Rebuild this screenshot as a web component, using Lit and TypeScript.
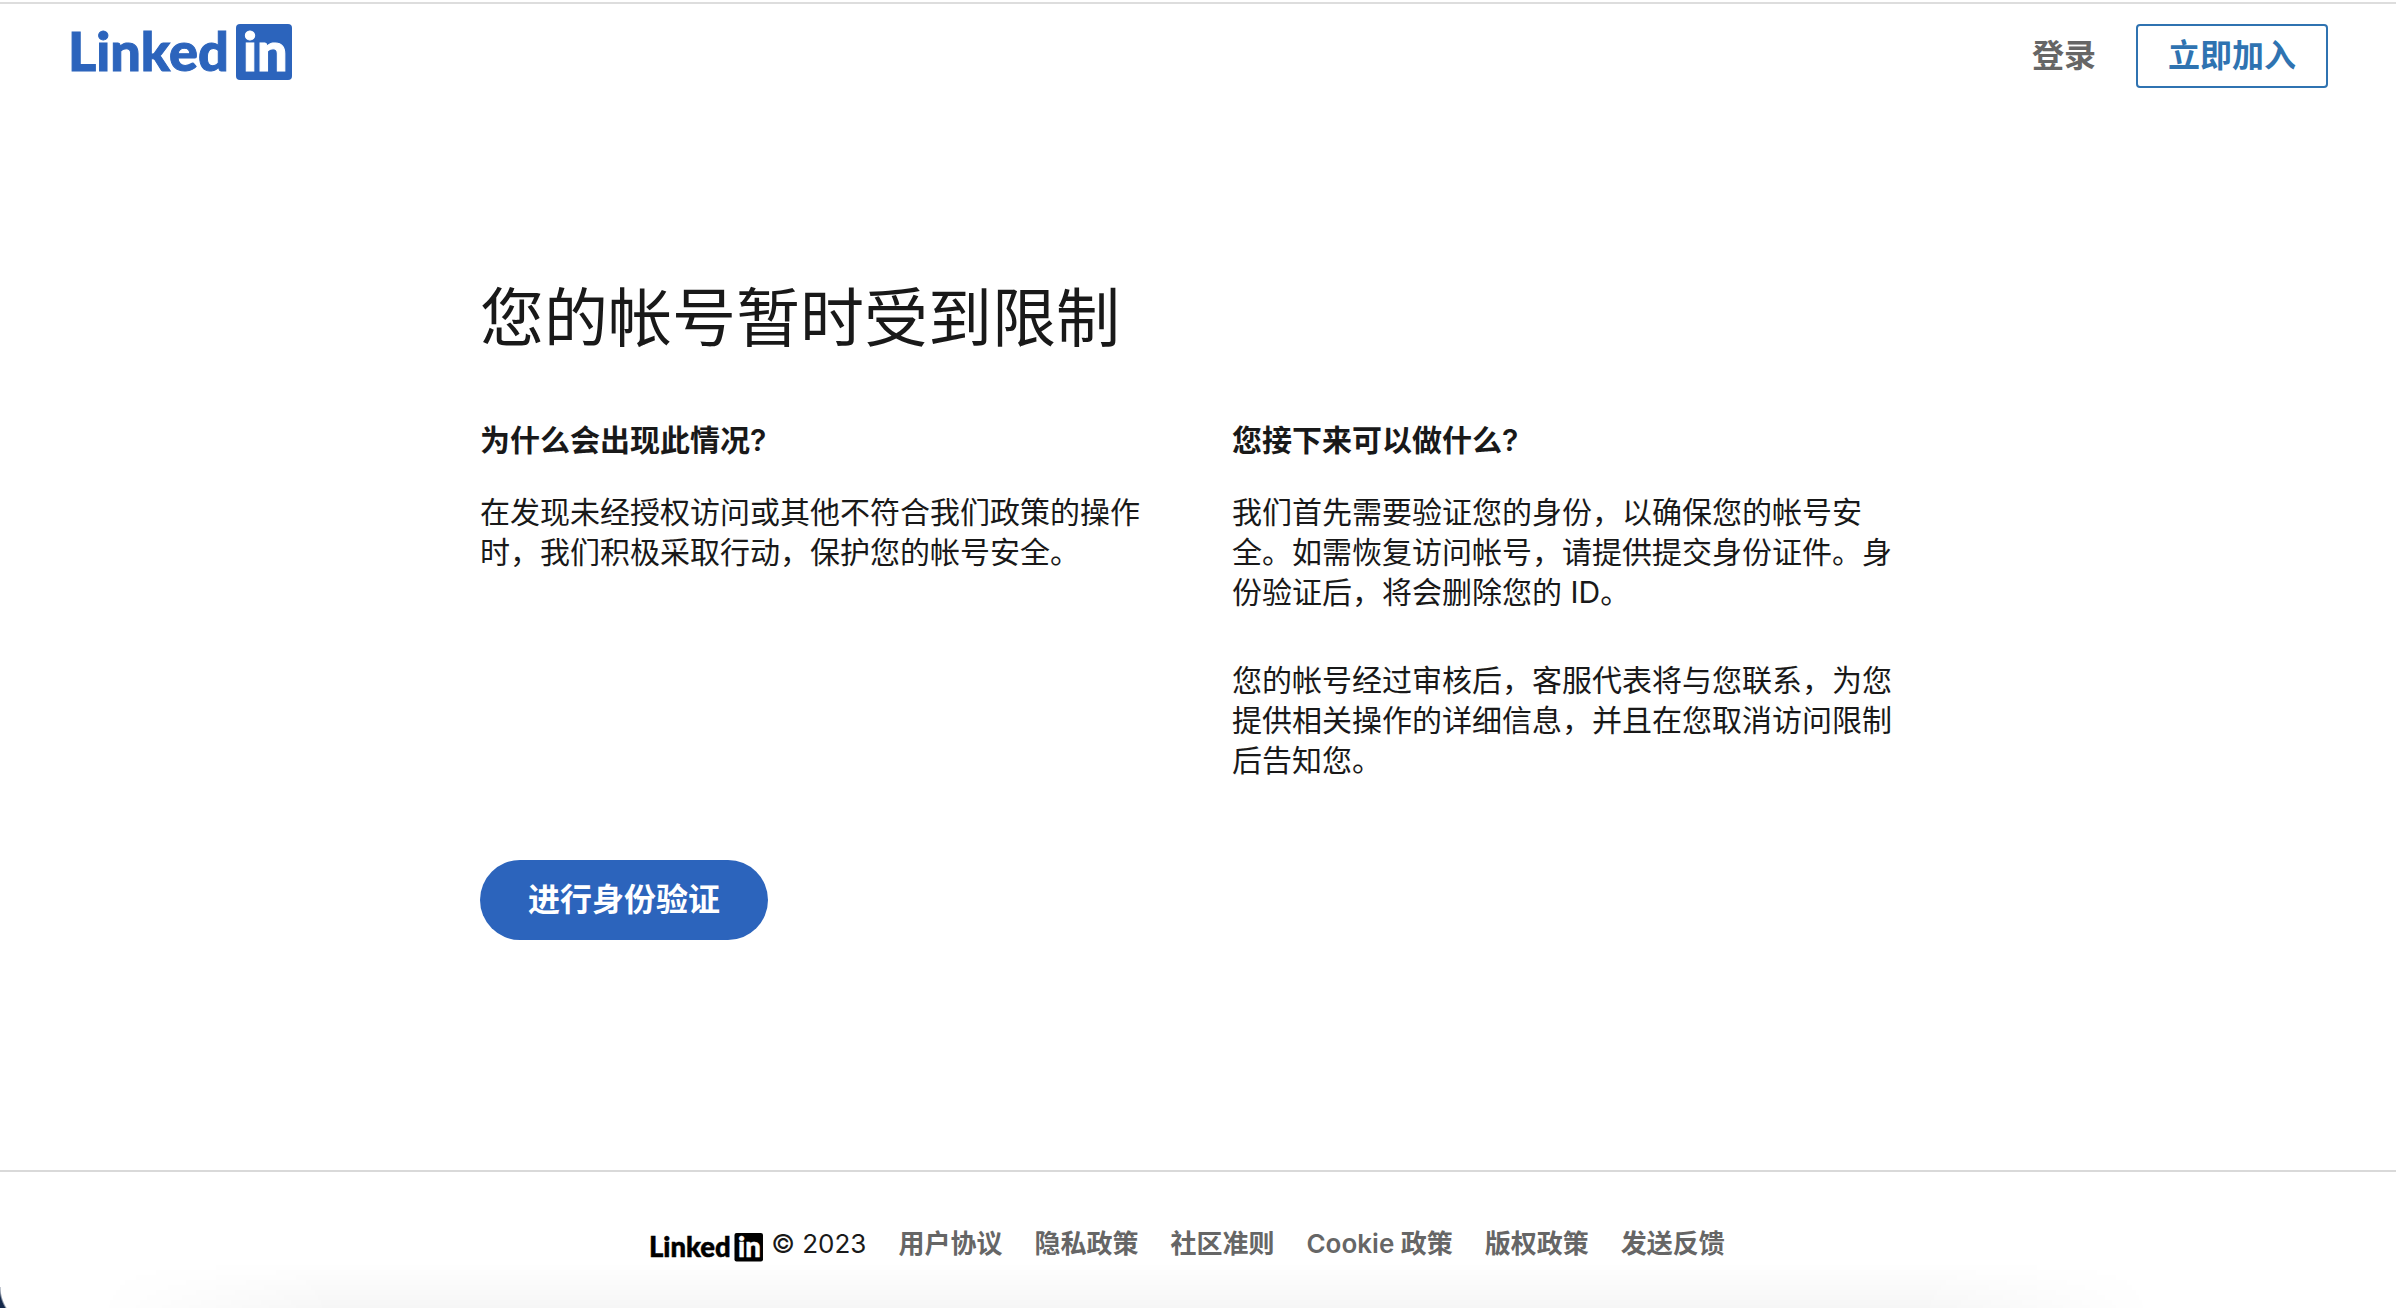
import { LitElement, html, css } from "lit";
import { customElement } from "lit/decorators.js";

@customElement("brand-logo")
class BrandLogo extends LitElement {
  static styles = css`
    :host {
      display: block;
    }
    .logo {
      display: block;
      width: 100%;
      height: auto;
      overflow: visible;
      fill: currentColor;
    }
    .word {
      font-family: Lato, "Open Sans", sans-serif;
      font-weight: 900;
      font-size: 54px;
      stroke: currentColor;
      stroke-width: 1px;
    }
    .inner {
      fill: #fff;
      stroke: #fff;
    }
  `;

  render() {
    return html`
      <svg class="logo" viewBox="0 0 220 56" role="img" aria-label="LinkedIn">
        <text class="word" x="-4" y="47">Linked</text>
        <rect x="164" width="56" height="56" rx="4"></rect>
        <text class="word inner" x="171" y="47">in</text>
      </svg>
    `;
  }
}

@customElement("app-root")
class AppRoot extends LitElement {
  static styles = css`
    :host {
      display: block;
      color: #191919;
      font-family: Inter, "Noto Sans CJK SC", sans-serif;
      font-size: 30px;
      line-height: 40px;
    }
    *,
    *::before {
      box-sizing: border-box;
    }
    h1,
    h2,
    p,
    ul {
      margin: 0;
      padding: 0;
    }
    a {
      color: inherit;
      text-decoration: none;
    }
    .page {
      position: relative;
      display: flex;
      flex-direction: column;
      min-height: 100vh;
      background: #fff;
      padding-top: 2px;
    }
    .header {
      display: flex;
      justify-content: space-between;
      align-items: flex-start;
      border-top: 2px solid #ddd;
      padding: 20px 68px 0 72px;
    }
    .brand {
      width: 220px;
      color: #2c64bc;
    }
    .nav {
      display: flex;
      align-items: center;
      gap: 40px;
      font-size: 32px;
      font-weight: 600;
      color: #666;
    }
    .join {
      border: 2px solid #2f73b1;
      border-radius: 4px;
      padding: 10px 30px;
      color: #2f73b1;
    }
    .main {
      flex: 1;
      width: 100%;
      max-width: 1436px;
      margin: 0 auto;
      padding: 190px 0 96px;
    }
    .title {
      font-size: 64px;
      line-height: 80px;
      font-weight: 400;
    }
    .columns {
      display: grid;
      grid-template-columns: 1fr 1fr;
      gap: 68px;
      padding: 62px 0 80px;
    }
    .subtitle {
      font-size: 30px;
      font-weight: 600;
      margin-bottom: 32px;
    }
    .text + .text {
      margin-top: 48px;
    }
    .verify {
      height: 80px;
      border: 0;
      border-radius: 40px;
      padding: 0 48px;
      background: #2c64bc;
      color: #fff;
      font: inherit;
      font-size: 32px;
      font-weight: 600;
      cursor: pointer;
    }
    .footer {
      display: flex;
      justify-content: center;
      align-items: center;
      gap: 32px;
      border-top: 2px solid #d9d9d9;
      padding: 52px 20px 44px 0;
      font-size: 26px;
    }
    .copyright {
      display: flex;
      align-items: center;
      gap: 8px;
    }
    .mark {
      width: 112px;
      padding-top: 6px;
      color: #000;
    }
    .links {
      display: flex;
      gap: 32px;
      list-style: none;
      font-weight: 600;
      color: #666;
    }
    .shade {
      position: absolute;
      inset: auto 0 0 0;
      height: 46px;
      pointer-events: none;
      background: linear-gradient(to bottom, transparent, rgba(0, 0, 0, 0.035));
      mask-image: linear-gradient(to right, transparent 4%, #000 14%, #000 80%, transparent 90%);
    }
    .corner {
      position: absolute;
      left: 0;
      bottom: 0;
      width: 20px;
      height: 21px;
      pointer-events: none;
      background: radial-gradient(circle at 40px 0, transparent 39px, #15294b 41px);
    }
  `;

  private links = ["用户协议", "隐私政策", "社区准则", "Cookie 政策", "版权政策", "发送反馈"];

  render() {
    return html`
      <div class="page" lang="zh-CN">
        <header class="header">
          <a href="#"><brand-logo class="brand"></brand-logo></a>
          <nav class="nav">
            <a href="#">登录</a>
            <a class="join" href="#">立即加入</a>
          </nav>
        </header>
        <main class="main">
          <h1 class="title">您的帐号暂时受到限制</h1>
          <div class="columns">
            <section>
              <h2 class="subtitle">为什么会出现此情况?</h2>
              <p class="text">在发现未经授权访问或其他不符合我们政策的操作时，我们积极采取行动，保护您的帐号安全。</p>
            </section>
            <section>
              <h2 class="subtitle">您接下来可以做什么?</h2>
              <p class="text">我们首先需要验证您的身份，以确保您的帐号安全。如需恢复访问帐号，请提供提交身份证件。身份验证后，将会删除您的 ID。</p>
              <p class="text">您的帐号经过审核后，客服代表将与您联系，为您提供相关操作的详细信息，并且在您取消访问限制后告知您。</p>
            </section>
          </div>
          <button class="verify" type="button">进行身份验证</button>
        </main>
        <footer class="footer">
          <div class="copyright">
            <brand-logo class="mark"></brand-logo>
            <span>© 2023</span>
          </div>
          <ul class="links">
            ${this.links.map((label) => html`<li><a href="#">${label}</a></li>`)}
          </ul>
        </footer>
        <div class="shade"></div>
        <div class="corner"></div>
      </div>
    `;
  }
}
